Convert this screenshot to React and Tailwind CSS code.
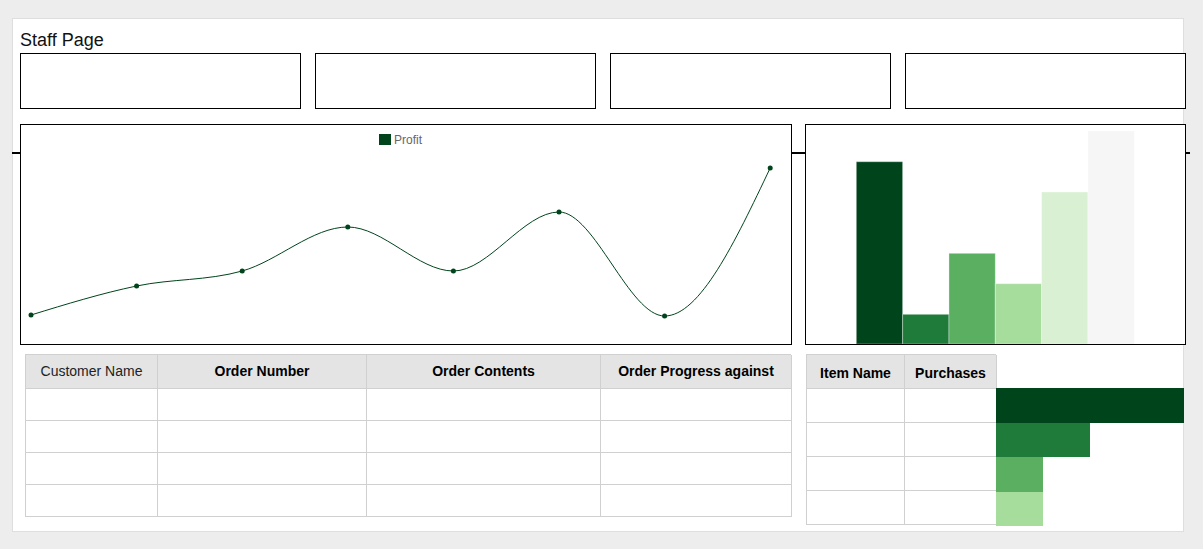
import React from "react";

const font = { fontFamily: '"Liberation Sans", Arial, sans-serif' };

// profit line, inner coords of the chart box
const profit = [190, 161, 146, 102, 146, 87, 191, 43].map((y, i) => [
  10 + i * 105.6,
  y,
]);

// d3-style monotoneX curve
const monotonePath = (p) => {
  const n = p.length;
  const t = new Array(n).fill(0);
  for (let i = 1; i < n - 1; i++) {
    const h0 = p[i][0] - p[i - 1][0];
    const h1 = p[i + 1][0] - p[i][0];
    const s0 = (p[i][1] - p[i - 1][1]) / h0;
    const s1 = (p[i + 1][1] - p[i][1]) / h1;
    const q = (s0 * h1 + s1 * h0) / (h0 + h1);
    t[i] =
      (Math.sign(s0) + Math.sign(s1)) *
        Math.min(Math.abs(s0), Math.abs(s1), 0.5 * Math.abs(q)) || 0;
  }
  const h = p[1][0] - p[0][0];
  t[0] = (3 * (p[1][1] - p[0][1])) / h / 2 - t[1] / 2;
  const hl = p[n - 1][0] - p[n - 2][0];
  t[n - 1] = (3 * (p[n - 1][1] - p[n - 2][1])) / hl / 2 - t[n - 2] / 2;
  let d = `M${p[0][0]},${p[0][1]}`;
  for (let i = 0; i < n - 1; i++) {
    const [x0, y0] = p[i];
    const [x1, y1] = p[i + 1];
    const dx = (x1 - x0) / 3;
    d += ` C${x0 + dx},${y0 + dx * t[i]} ${x1 - dx},${y1 - dx * t[i + 1]} ${x1},${y1}`;
  }
  return d;
};

const columnBars = [
  { top: 36.7, fill: "#00441b" },
  { top: 189.3, fill: "#1e7b3a" },
  { top: 128.3, fill: "#5aaf61" },
  { top: 158.7, fill: "#a6dc9c" },
  { top: 67, fill: "#d9f0d3" },
  { top: 6, fill: "#f6f6f6" },
];

const purchaseBars = [
  { w: "w-[188px]", bg: "bg-[#00441b]" },
  { w: "w-[94px]", bg: "bg-[#1e7b3a]" },
  { w: "w-[47px]", bg: "bg-[#5aaf61]" },
  { w: "w-[47px]", bg: "bg-[#a6dc9c]" },
];

const ProfitChart = () => (
  <div className="w-[772px] h-[221px] border border-black bg-white relative z-10">
    <svg width="770" height="219" className="block">
      <rect x="358" y="9" width="12" height="11" fill="#00441b" />
      <text x="373" y="19" fontSize="12" fill="#666" style={font}>
        Profit
      </text>
      <path d={monotonePath(profit)} fill="none" stroke="#00441b" strokeWidth="1" />
      {profit.map(([x, y], i) => (
        <circle key={i} cx={x} cy={y} r="2.5" fill="#00441b" />
      ))}
    </svg>
  </div>
);

const ColumnChart = () => (
  <div className="w-[381px] h-[221px] border border-black bg-white relative z-10">
    <svg width="379" height="219" className="block">
      {columnBars.map((b, i) => (
        <rect
          key={i}
          x={50.3 + i * 46.33}
          y={b.top}
          width="46.33"
          height={219 - b.top}
          fill={b.fill}
          stroke="#ffffff"
          strokeOpacity="0.35"
          strokeWidth="1"
        />
      ))}
    </svg>
  </div>
);

const OrdersTable = () => {
  const cell = "border-r border-b border-[#d0d0d0]";
  const head = `${cell} h-[34px] bg-[#e4e4e4] flex items-center justify-center`;
  return (
    <div className="ml-[5px] w-[766px] border-l border-t border-[#d0d0d0] grid grid-cols-[132px_209px_234px_191px] content-start text-[14px]">
      <div className={`${head} text-[#222]`}>Customer Name</div>
      <div className={`${head} font-bold text-black`}>Order Number</div>
      <div className={`${head} font-bold text-black`}>Order Contents</div>
      <div className={`${head} font-bold text-black`}>Order Progress against</div>
      {Array.from({ length: 16 }).map((_, i) => (
        <div key={i} className={`${cell} h-[32px]`} />
      ))}
    </div>
  );
};

const PurchasesTable = () => {
  const cell = "border-r border-b border-[#d0d0d0]";
  return (
    <div className="flex items-start">
      <div className="w-[190px] border-l border-t border-[#d0d0d0] grid grid-cols-[98px_92px] text-[14px] font-bold text-black">
        <div className={`${cell} h-[34px] bg-[#e4e4e4] flex items-center justify-center pt-[4px]`}>
          Item Name
        </div>
        <div className={`${cell} h-[34px] bg-[#e4e4e4] flex items-center justify-center pt-[4px]`}>
          Purchases
        </div>
        {Array.from({ length: 8 }).map((_, i) => (
          <div key={i} className={`${cell} h-[34px]`} />
        ))}
      </div>
      <div className="w-[188px] pt-[34px] flex flex-col">
        {purchaseBars.map((b, i) => (
          <div key={i} className={`${b.w} ${b.bg} h-[34.6px]`} />
        ))}
      </div>
    </div>
  );
};

export default function App() {
  return (
    <div className="min-h-screen bg-[#ededed] pt-[18px] pl-[12px]" style={font}>
      <div className="w-[1172px] h-[514px] bg-white border border-[#dedede] pt-[11px] pl-[7px]">
        <h1 className="text-[18px] leading-[21px] text-[#111] mb-[2px]">Staff Page</h1>

        <div className="w-[1166px] grid grid-cols-4 gap-[14px] mb-[15px]">
          {[0, 1, 2, 3].map((i) => (
            <div key={i} className="h-[56px] border border-black bg-white" />
          ))}
        </div>

        <div className="relative w-[1166px] flex gap-[13px] mb-[9px]">
          <div className="absolute left-[-8px] top-[28px] w-[1178px] h-[2px] bg-black" />
          <ProfitChart />
          <ColumnChart />
        </div>

        <div className="flex items-start gap-[15px]">
          <OrdersTable />
          <PurchasesTable />
        </div>
      </div>
    </div>
  );
}
